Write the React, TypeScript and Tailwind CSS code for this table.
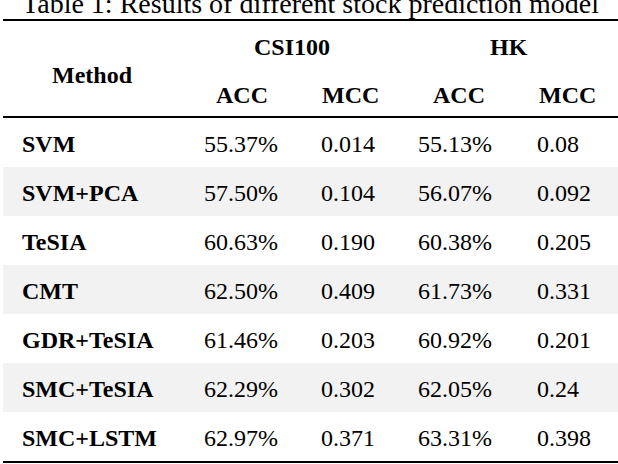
const rows: Array<[string, string, string, string, string]> = [
  ['SVM', '55.37%', '0.014', '55.13%', '0.08'],
  ['SVM+PCA', '57.50%', '0.104', '56.07%', '0.092'],
  ['TeSIA', '60.63%', '0.190', '60.38%', '0.205'],
  ['CMT', '62.50%', '0.409', '61.73%', '0.331'],
  ['GDR+TeSIA', '61.46%', '0.203', '60.92%', '0.201'],
  ['SMC+TeSIA', '62.29%', '0.302', '62.05%', '0.24'],
  ['SMC+LSTM', '62.97%', '0.371', '63.31%', '0.398'],
];

export default function App() {
  return (
    <div className="w-[618px] h-[464px] overflow-hidden bg-white text-black font-['Liberation_Serif','Times_New_Roman',serif]">
      <p className="-mt-[10px] h-[28px] text-center text-[28px] leading-[28px] whitespace-nowrap pl-[3px]">
        Table 1: Results of different stock prediction model
      </p>

      <div className="ml-[3px] mt-px">
        {/* header */}
        <div className="grid h-[99px] grid-cols-[201px_117px_97px_119px_1fr] grid-rows-2 border-t-2 border-b-2 border-black text-[24px] font-bold leading-none">
          <div className="row-span-2 flex items-center pl-[49px] pt-[12px]">Method</div>
          <div className="col-span-2 flex items-center pl-[50px] pt-[5px]">CSI100</div>
          <div className="col-span-2 flex items-center pl-[72px] pt-[5px]">HK</div>
          <div className="flex items-center pl-[12px] pt-[5px]">ACC</div>
          <div className="flex items-center pl-px pt-[5px]">MCC</div>
          <div className="flex items-center pl-[15px] pt-[5px]">ACC</div>
          <div className="flex items-center pl-[2px] pt-[5px]">MCC</div>
        </div>

        {/* body */}
        <div className="border-b-2 border-black text-[24px] leading-none">
          {rows.map((r, i) => (
            <div
              key={r[0]}
              className={`grid h-[49px] grid-cols-[201px_117px_97px_119px_1fr] items-center pt-[2px] ${i % 2 === 1 ? 'bg-[#f2f2f2]' : 'bg-white'}`}
            >
              <div className="pl-[19px] font-bold">{r[0]}</div>
              <div>{r[1]}</div>
              <div>{r[2]}</div>
              <div>{r[3]}</div>
              <div>{r[4]}</div>
            </div>
          ))}
        </div>
      </div>
    </div>
  );
}
